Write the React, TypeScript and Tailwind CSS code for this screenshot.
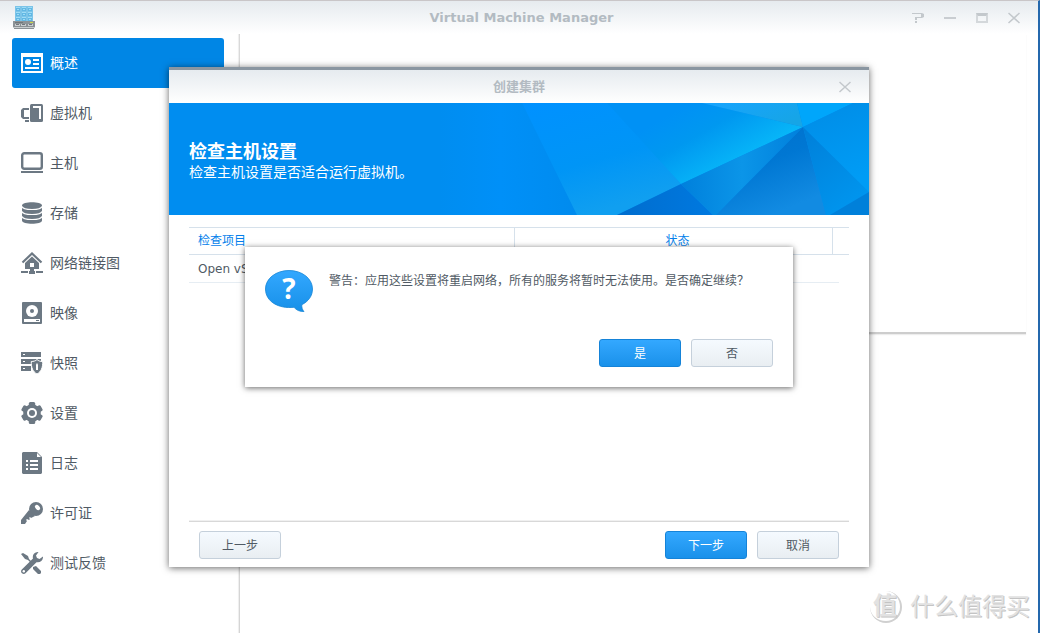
import { useState } from 'react';
import type { ReactNode } from 'react';

const ICON = '#6c7883';

function OverviewIcon() {
  return (
    <svg width="22" height="22" viewBox="0 0 22 22" fill="#fff" aria-hidden="true">
      <path fillRule="evenodd" d="M0 1h22v20H0zM2 5v14h18V5z" />
      <circle cx="7" cy="10" r="3" />
      <path d="M12 7h6v2h-6zM12 11h6v2h-6zM4 15h14v2H4z" />
    </svg>
  );
}

function VirtualMachineIcon() {
  return (
    <svg width="22" height="22" viewBox="0 0 22 22" fill={ICON} aria-hidden="true">
      <path d="M2 6h6v2H3v7h5v2H2l-2-2V8zM4 18h4v2H4z" />
      <rect x="9" y="2" width="13" height="18" rx="1.500" />
      <path fill="#fff" d="M12 4h8v13h-2V6h-6z" />
    </svg>
  );
}

function HostIcon() {
  return (
    <svg width="22" height="22" viewBox="0 0 22 22" fill="none" stroke={ICON} aria-hidden="true">
      <rect x="1.200" y="1.200" width="19.600" height="15.600" rx="2" strokeWidth="2.400" />
      <path d="M0 20h22" strokeWidth="2" />
    </svg>
  );
}

function StorageIcon() {
  return (
    <svg width="22" height="22" viewBox="0 0 22 22" aria-hidden="true">
      <path fill={ICON} d="M1 3.500C1 -.9 21 -.9 21 3.500v15c0 4.400-20 4.400-20 0z" />
      <g fill="none" stroke="#fff" strokeWidth="1.200">
        <path d="M1 4.500c1 4 19 4 20 0M1 9.500c1 4 19 4 20 0M1 14.500c1 4 19 4 20 0" />
      </g>
    </svg>
  );
}

function NetworkIcon() {
  return (
    <svg width="22" height="22" viewBox="0 0 22 22" aria-hidden="true">
      <path d="M1.500 10.500 11 1.500l9.500 9" fill="none" stroke={ICON} strokeWidth="2.200" />
      <path fill={ICON} fillRule="evenodd" d="M11 4.500 18 11v6h-5v2h1v3H8v-3h1v-2H4v-6zM9 11v4h4v-4z" />
      <path fill={ICON} d="M0 19h7v2H0zM15 19h7v2h-7z" />
    </svg>
  );
}

function ImageIcon() {
  return (
    <svg width="22" height="22" viewBox="0 0 22 22" aria-hidden="true">
      <rect x="1" width="20" height="22" rx="1" fill={ICON} />
      <circle cx="11" cy="9" r="6" fill="#fff" />
      <circle cx="11" cy="9" r="2" fill={ICON} />
      <path fill="#fff" d="M3 17h16v3H3z" />
      <path fill={ICON} d="M15 18h3v1h-3z" />
    </svg>
  );
}

function SnapshotIcon() {
  return (
    <svg width="22" height="22" viewBox="0 0 22 22" aria-hidden="true">
      <path fill={ICON} d="M0 0h20v5H0zM0 7h20v5H0zM0 14h10v5H0z" />
      <path fill="#fff" d="M2 2h2v1H2zM2 9h2v1H2zM2 16h2v1H2z" />
      <path
        fill={ICON}
        stroke="#fff"
        d="M16 7.500c1.500 1.500 3.500 2 5.700 2 .3 6-1.700 10.500-5.700 12.500-4-2-6-6.500-5.700-12.500 2.200 0 4.200-.5 5.700-2z"
      />
      <path fill="#fff" d="M15 12.500 16 11l1 1.500v5.500h-2z" />
    </svg>
  );
}

function SettingsIcon() {
  return (
    <svg width="22" height="22" viewBox="0 0 22 22" fill={ICON} aria-hidden="true">
      <circle cx="11" cy="11" r="8.800" />
      {[0, 60, 120].map((angle) => (
        <rect key={angle} x="7.800" width="6.400" height="22" rx="1.500" transform={`rotate(${angle} 11 11)`} />
      ))}
      <circle cx="11" cy="11" r="5" fill="#fff" />
      <circle cx="11" cy="11" r="3" />
    </svg>
  );
}

function LogIcon() {
  return (
    <svg width="22" height="22" viewBox="0 0 22 22" aria-hidden="true">
      <path fill={ICON} d="M2 0h14l5 5v16l-1 1H2l-1-1V1z" />
      <path fill="#fff" d="m16 1 4 4h-4zM5 8h2v2H5zM9 8h8v2H9zM5 12h2v2H5zM9 12h8v2H9zM5 16h2v2H5zM9 16h8v2H9z" />
    </svg>
  );
}

function KeyIcon() {
  return (
    <svg width="22" height="22" viewBox="0 0 22 22" aria-hidden="true">
      <circle cx="15" cy="7" r="7" fill={ICON} />
      <path fill={ICON} d="m8 8 6 6-4 2-1-1-1 1 1 1-1 1-2-1-1 1 1 1-2 3H0v-4z" />
      <ellipse cx="16.500" cy="5.500" rx="2" ry="3" fill="#fff" transform="rotate(-45 16.500 5.500)" />
    </svg>
  );
}

function FeedbackIcon() {
  return (
    <svg width="22" height="22" viewBox="0 0 22 22" aria-hidden="true">
      <path fill={ICON} d="m0 2 2-1 5 3 1 3 4 4-1 1-4-4-3-1zM12 15l3-1 5 5v2l-1 1h-2l-5-5z" />
      <path
        fill={ICON}
        d="M17.500 0 15 3.500l1 2.500 2.500 1L22 4.500c.3 4-3 6.500-6.500 5.700L4.500 21.300c-1 .9-2.500.9-3.500 0-1.200-1-1.200-2.600-.2-3.700L12 6.500C11 3 13.500-.2 17.500 0z"
      />
      <circle cx="2.800" cy="19.200" r="1.200" fill="#fff" />
    </svg>
  );
}

function AppLogo() {
  return (
    <svg width="22" height="24" viewBox="0 0 22 24" aria-hidden="true">
      <rect x="2" width="18" height="16" fill="#7cc4e8" />
      {[0, 5, 10].map((y) =>
        [3, 9, 15].map((x) => (
          <g key={`${x}-${y}`}>
            <path fill="#62b8e4" d={`M${x} ${y + 1}h4v4h-4z`} />
            <path fill="#9edcf6" d={`M${x} ${y + 1}h4v1h-4zM${x + 1} ${y + 3}h2v1h-2z`} />
          </g>
        ))
      )}
      <path fill="#8d9397" d="M0 15h22v3H0z" />
      <path fill="#70777b" d="M2 16h8v1H2z" />
      <path fill="#8a9094" d="M0 18h22v3H0zM1 22h20v1H1z" />
      <path fill="#c9cdcf" d="M0 21h22v1H0zM2 18h5v2H2zM8 18h5v2H8zM15 18h5v2h-5z" />
      <path fill="#70777b" d="M3 18h3v1H3zM9 18h3v1H9zM16 18h3v1h-3z" />
      <path fill="#c8d84a" d="M17 16h3v1h-3z" />
    </svg>
  );
}

function CloseIcon() {
  return (
    <svg width="12" height="12" viewBox="0 0 12 12" fill="none" stroke="#c3c8cc" aria-hidden="true">
      <path d="m.5 1 11 10M11.500 1l-11 10" strokeWidth="1.500" />
    </svg>
  );
}

function QuestionBubble() {
  return (
    <svg width="48" height="42" viewBox="0 0 48 42" className="shrink-0" aria-hidden="true">
      <defs>
        <linearGradient id="bubble" x2="0" y2="1">
          <stop stopColor="#33a8ff" />
          <stop offset="1" stopColor="#1790e8" />
        </linearGradient>
      </defs>
      <path
        fill="url(#bubble)"
        stroke="#1685d6"
        strokeWidth=".8"
        d="M24 .5C37 .5 47.500 8.500 47.500 19c0 7-4.200 12.500-10.700 15.700-.2 3 .7 5.300 2.200 6.800-4 .2-7.500-1.200-10-4.200C13.500 39 .5 31.500.5 19 .5 8.500 11 .5 24 .5z"
      />
      <text x="24" y="29" textAnchor="middle" fontSize="28" fontWeight="700" fill="#fff" fontFamily="'Open Sans', sans-serif">
        ?
      </text>
    </svg>
  );
}

function BannerArt() {
  return (
    <svg width="700" height="112" viewBox="0 0 700 112" className="absolute right-0 top-0" aria-hidden="true">
      <defs>
        <linearGradient id="b1" x1="0" x2="1">
          <stop stopColor="#008df0" />
          <stop offset=".45" stopColor="#0090f8" />
          <stop offset="1" stopColor="#008bee" />
        </linearGradient>
        <linearGradient id="b2" x2=".4" y2="1">
          <stop stopColor="#0091ff" />
          <stop offset=".6" stopColor="#0095f6" />
          <stop offset="1" stopColor="#109ff0" />
        </linearGradient>
        <linearGradient id="b3" gradientUnits="userSpaceOnUse" x1="520" y1="0" x2="560" y2="70">
          <stop stopColor="#0091f5" />
          <stop offset=".4" stopColor="#0098f0" />
          <stop offset="1" stopColor="#08b9f9" />
        </linearGradient>
        <linearGradient id="b4" x2="1" y2=".6">
          <stop stopColor="#18a4ff" />
          <stop offset="1" stopColor="#16a5e6" />
        </linearGradient>
        <linearGradient id="b5" x2="1">
          <stop stopColor="#0080dc" />
          <stop offset=".5" stopColor="#0b95e8" />
          <stop offset="1" stopColor="#0080dc" />
        </linearGradient>
        <linearGradient id="b6" x2=".5" y2="1">
          <stop stopColor="#0070cc" />
          <stop offset=".5" stopColor="#0077d3" />
          <stop offset="1" stopColor="#128be2" />
        </linearGradient>
        <linearGradient id="b7" x2=".6" y2="1">
          <stop stopColor="#007fd9" />
          <stop offset="1" stopColor="#0095ee" />
        </linearGradient>
        <linearGradient id="b8" x2=".3" y2="1">
          <stop stopColor="#008ce6" />
          <stop offset="1" stopColor="#009cf5" />
        </linearGradient>
        <linearGradient id="b9" x2="1">
          <stop stopColor="#006dce" />
          <stop offset="1" stopColor="#0079e0" />
        </linearGradient>
      </defs>
      <path fill="url(#b1)" d="M270 0h83l55 112H270z" />
      <path fill="url(#b2)" d="M353 0h88l71 81-64 31h-40z" />
      <path fill="url(#b3)" d="M438 0h95l101 24-122 57z" />
      <path fill="url(#b4)" d="M533 0h95l6 24z" />
      <path fill="#00a6fb" d="M628 0h56l-50 24z" />
      <path fill="url(#b8)" d="M684 0h16v90l-66-66z" />
      <path fill="url(#b9)" d="m512 81 32 31h-96z" />
      <path fill="url(#b5)" d="m634 24-87 88h-3l-32-31z" />
      <path fill="url(#b6)" d="m634 24 23 88H547z" />
      <path fill="url(#b7)" d="m634 24 66 65-39 23h-4z" />
      <path fill="#0080da" d="M700 89v23h-39z" />
    </svg>
  );
}

const menuItems: { label: string; icon: ReactNode }[] = [
  { label: '概述', icon: <OverviewIcon /> },
  { label: '虚拟机', icon: <VirtualMachineIcon /> },
  { label: '主机', icon: <HostIcon /> },
  { label: '存储', icon: <StorageIcon /> },
  { label: '网络链接图', icon: <NetworkIcon /> },
  { label: '映像', icon: <ImageIcon /> },
  { label: '快照', icon: <SnapshotIcon /> },
  { label: '设置', icon: <SettingsIcon /> },
  { label: '日志', icon: <LogIcon /> },
  { label: '许可证', icon: <KeyIcon /> },
  { label: '测试反馈', icon: <FeedbackIcon /> },
];

function Button({ primary = false, onClick, children }: { primary?: boolean; onClick?: () => void; children: ReactNode }) {
  return (
    <button
      type="button"
      onClick={onClick}
      className={
        primary
          ? 'h-7 w-[82px] rounded-[3px] border border-[#1583d8] bg-linear-to-b from-[#33a8ff] to-[#1991ea] pt-px text-xs text-white'
          : 'h-7 w-[82px] rounded-[3px] border border-[#c5d0db] bg-linear-to-b from-[#f5faff] to-[#e9eef2] pt-px text-xs text-[#505a64]'
      }
    >
      {children}
    </button>
  );
}

function WindowButton({ label, onClick, children }: { label: string; onClick?: () => void; children: ReactNode }) {
  return (
    <button type="button" aria-label={label} onClick={onClick} className="flex h-8 w-8 items-center justify-center">
      {children}
    </button>
  );
}

function ConfirmBox({ onClose }: { onClose: () => void }) {
  return (
    <div className="absolute inset-0 flex items-center justify-center">
      <div role="alertdialog" className="w-[548px] bg-white p-5 shadow-[0_1px_6px_rgba(0,0,0,0.6)]">
        <div className="flex gap-4 pt-[3px]">
          <QuestionBubble />
          <p className="pt-[3px] text-xs leading-4">警告：应用这些设置将重启网络，所有的服务将暂时无法使用。是否确定继续？</p>
        </div>
        <div className="mt-[27px] flex justify-end gap-[10px]">
          <Button primary onClick={onClose}>是</Button>
          <Button onClick={onClose}>否</Button>
        </div>
      </div>
    </div>
  );
}

function ClusterDialog({ onClose }: { onClose: () => void }) {
  return (
    <div className="absolute inset-0 flex items-center justify-center">
      <div
        role="dialog"
        className="flex min-h-[500px] w-[700px] flex-col border-t-3 border-[#8a96a1] bg-white shadow-[0_1px_7px_rgba(0,0,0,0.6)]"
      >
        <div className="grid h-[33px] grid-cols-[1fr_auto_1fr] items-center bg-linear-to-b from-[#e6ebef] to-white px-2">
          <h2 className="col-start-2 text-[13px] font-bold text-[#b3bbc2]">创建集群</h2>
          <div className="flex justify-end">
            <WindowButton label="关闭" onClick={onClose}>
              <CloseIcon />
            </WindowButton>
          </div>
        </div>

        <div className="relative h-28 overflow-hidden bg-[#008df0] px-5 pt-[39px] text-white">
          <BannerArt />
          <div className="relative">
            <h3 className="text-lg leading-5 font-bold">检查主机设置</h3>
            <p className="text-sm leading-5">检查主机设置是否适合运行虚拟机。</p>
          </div>
        </div>

        <div className="flex-1 px-5 pt-3">
          <table className="w-full table-fixed border-separate border-spacing-0 text-xs">
            <colgroup>
              <col />
              <col className="w-[318px]" />
              <col className="w-4" />
            </colgroup>
            <thead>
              <tr className="h-7 text-[#057feb]">
                <th className="border-y border-r border-[#d6e1eb] px-[9px] text-left font-normal">检查项目</th>
                <th className="border-y border-r border-[#d6e1eb] pr-2 pl-4 text-center font-normal">状态</th>
                <th className="border-y border-[#d6e1eb] p-0" />
              </tr>
            </thead>
            <tbody>
              <tr className="h-7">
                <td className="border-b border-[#e6edf3] px-[9px]">Open vSwitch</td>
                <td className="border-b border-[#e6edf3] px-2" />
                <td className="p-0">
                  <div className="h-7 w-[6px] border-b border-[#e6edf3]" />
                </td>
              </tr>
            </tbody>
          </table>
        </div>

        <div className="mx-5 flex items-center gap-[10px] border-t border-[#d8d8d8] px-[10px] pt-[9px] pb-2 shadow-[0_-1px_0_#f0f0f0]">
          <Button>上一步</Button>
          <div className="flex-1" />
          <Button primary>下一步</Button>
          <Button onClick={onClose}>取消</Button>
        </div>
      </div>
    </div>
  );
}

function Watermark() {
  return (
    <div className="absolute right-2 bottom-2 flex items-center gap-2 text-[#e2e2e2] text-shadow-[1px_1px_0_#c4c4c4]">
      <span className="flex h-8 w-8 items-center justify-center rounded-full border-r-2 border-b-2 border-[#d0d0d0] text-2xl leading-8 font-bold">
        值
      </span>
      <span className="text-2xl leading-9">什么值得买</span>
    </div>
  );
}

export default function App() {
  const [active, setActive] = useState('概述');
  const [dialogOpen, setDialogOpen] = useState(true);
  const [confirmOpen, setConfirmOpen] = useState(true);

  return (
    <div className="relative flex min-h-screen flex-col border-t border-r-2 border-t-[#c9c6c8] border-r-[#2468ad] bg-white font-['DejaVu_Sans','Noto_Sans_CJK_SC',sans-serif] text-[#505a64]">
      <header className="grid h-[33px] grid-cols-[1fr_auto_1fr] items-center bg-linear-to-b from-[#e6ebef] to-white pr-2 pl-[13px]">
        <AppLogo />
        <h1 className="text-[13px] font-bold text-[#b3bbc2]">Virtual Machine Manager</h1>
        <div className="flex justify-end">
          <WindowButton label="帮助">
            <svg width="12" height="10" viewBox="0 0 12 10" fill="#c3c8cc" aria-hidden="true">
              <path d="M0 0h10l2 1v3l-2 1H5v2H3V4h6V1H0zM3 8h2v2H3z" />
            </svg>
          </WindowButton>
          <WindowButton label="最小化">
            <span className="h-[2px] w-3 bg-[#c9cdd1]" />
          </WindowButton>
          <WindowButton label="最大化">
            <span className="h-[10px] w-3 border-2 border-t-3 border-[#d4d8db] border-t-[#c3c8cc]" />
          </WindowButton>
          <WindowButton label="关闭">
            <CloseIcon />
          </WindowButton>
        </div>
      </header>

      <div className="flex flex-1">
        <nav className="w-60 border-r border-[#d5d5d5] pt-1 pr-[15px] pl-3 shadow-[inset_-2px_0_1px_-1px_#eeeeee]">
          {menuItems.map(({ label, icon }) => (
            <button
              key={label}
              type="button"
              onClick={() => setActive(label)}
              className={
                active === label
                  ? 'flex h-[50px] w-full items-center gap-[7px] rounded-[3px] bg-[#0086e5] pl-[9px] text-sm text-white'
                  : 'flex h-[50px] w-full items-center gap-[7px] rounded-[3px] pl-[9px] text-sm'
              }
            >
              {icon}
              {label}
            </button>
          ))}
        </nav>
        <main className="flex-1 pr-3">
          <div className="h-[300px] border-b-2 border-[#cdcdcd] shadow-[0_1px_1px_#ededed]" />
        </main>
      </div>

      <Watermark />
      {dialogOpen && <ClusterDialog onClose={() => setDialogOpen(false)} />}
      {confirmOpen && <ConfirmBox onClose={() => setConfirmOpen(false)} />}
    </div>
  );
}
